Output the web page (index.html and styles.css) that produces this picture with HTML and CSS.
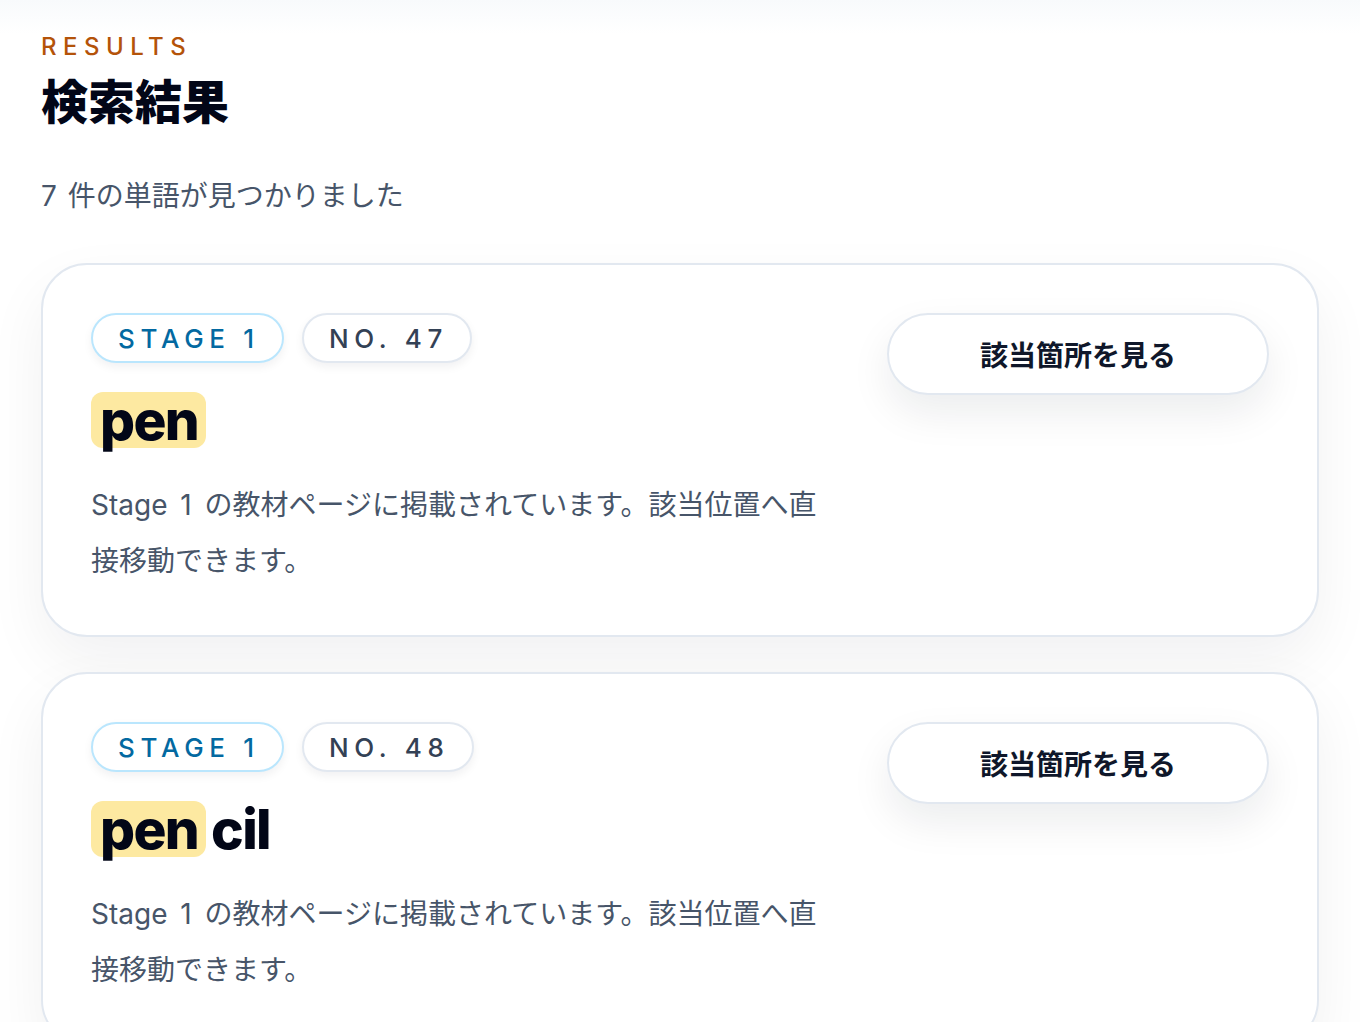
FILE: index.html
```html
<!DOCTYPE html>
<html lang="ja">
<head>
    <meta charset="UTF-8">
    <meta name="viewport" content="width=device-width, initial-scale=1.0">
    <title>検索結果</title>
    <link rel="stylesheet" href="styles.css">
</head>
<body>
    <div class="page">
        <header class="results-head">
            <p class="eyebrow">RESULTS</p>
            <h1>検索結果</h1>
            <p class="count">7 件の単語が見つかりました</p>
        </header>

        <div class="result-list">
            <article class="result-card">
                <div class="result-main">
                    <div class="chips">
                        <span class="chip chip-stage">STAGE 1</span>
                        <span class="chip">NO. 47</span>
                    </div>
                    <h2 class="word"><mark>pen</mark></h2>
                    <p class="desc">Stage 1 の教材ページに掲載されています。該当位置へ直接移動できます。</p>
                </div>
                <button class="goto">該当箇所を見る</button>
            </article>

            <article class="result-card">
                <div class="result-main">
                    <div class="chips">
                        <span class="chip chip-stage">STAGE 1</span>
                        <span class="chip">NO. 48</span>
                    </div>
                    <h2 class="word"><mark>pen</mark>cil</h2>
                    <p class="desc">Stage 1 の教材ページに掲載されています。該当位置へ直接移動できます。</p>
                </div>
                <button class="goto">該当箇所を見る</button>
            </article>
        </div>
    </div>
</body>
</html>
```

FILE: styles.css
```css
body {
    margin: 0;
    background: #ffffff;
    font-family: Inter, "Noto Sans CJK JP", sans-serif;
    color: #0f172a;
}

.page {
    padding: 30px 41px 40px;
    background: linear-gradient(#f8fafc, #ffffff 34px);
}

.eyebrow {
    margin: 0;
    font-size: 24px;
    line-height: 34px;
    font-weight: 500;
    letter-spacing: 0.27em;
    color: #b45309;
}

h1 {
    margin: 8px 0 0;
    font-size: 47px;
    line-height: 60px;
    font-weight: 900;
    color: #020617;
}

.count {
    margin: 44px 0 0;
    font-size: 28px;
    line-height: 40px;
    word-spacing: 3px;
    color: #475569;
}

.result-list {
    display: flex;
    flex-direction: column;
    gap: 35px;
    margin-top: 47px;
}

.result-card {
    display: flex;
    align-items: flex-start;
    gap: 64px;
    padding: 48px 48px 46px;
    border: 2px solid #e2e8f0;
    border-radius: 46px;
    background: #ffffff;
    box-shadow: 0 24px 60px rgba(15, 23, 42, 0.06);
}

.result-main {
    flex: 1;
    min-width: 0;
}

.chips {
    display: flex;
    gap: 18px;
}

.chip {
    display: inline-flex;
    align-items: center;
    height: 50px;
    box-sizing: border-box;
    padding: 0 22px 0 25px;
    border: 2px solid #e2e8f0;
    border-radius: 999px;
    font-size: 26px;
    font-weight: 500;
    letter-spacing: 0.22em;
    color: #334155;
    background: #ffffff;
    box-shadow: 0 4px 10px rgba(15, 23, 42, 0.06);
}

.chip-stage {
    border-color: #bae6fd;
    color: #0369a1;
}

.word {
    margin: 29px 0 0;
    font-size: 55px;
    line-height: 56px;
    font-weight: 800;
    letter-spacing: -0.03em;
    color: #020617;
}

.word mark {
    display: inline-block;
    padding: 0 8px 0 9px;
    margin-right: 5px;
    border-radius: 12px;
    background: #fde9a1;
    color: inherit;
}

.desc {
    margin: 29px 0 0;
    font-size: 28px;
    line-height: 56px;
    word-spacing: 5px;
    color: #475569;
}

.goto {
    flex: 0 0 382px;
    height: 82px;
    border: 2px solid #e2e8f0;
    border-radius: 999px;
    background: #ffffff;
    font-family: inherit;
    font-size: 28px;
    font-weight: 700;
    color: #0f172a;
    cursor: pointer;
    box-shadow: 0 18px 40px rgba(15, 23, 42, 0.08);
}
```
